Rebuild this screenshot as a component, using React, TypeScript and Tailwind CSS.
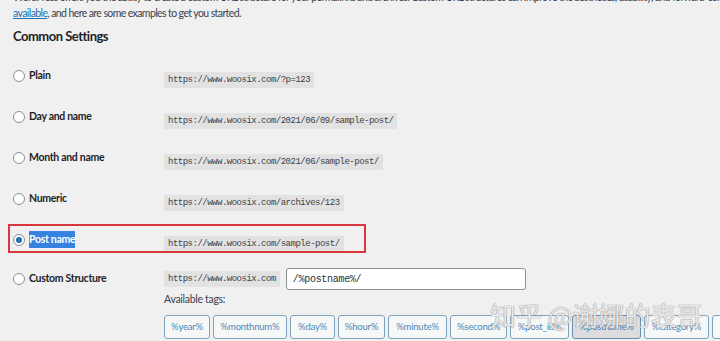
import React from 'react';

const rows = [
  { label: 'Plain', url: 'https://www.woosix.com/?p=123' },
  { label: 'Day and name', url: 'https://www.woosix.com/2021/06/09/sample-post/' },
  { label: 'Month and name', url: 'https://www.woosix.com/2021/06/sample-post/' },
  { label: 'Numeric', url: 'https://www.woosix.com/archives/123' },
];

// tag buttons, widths taken from the screenshot
const tags = [
  { t: '%year%', w: 'w-[46px]' },
  { t: '%monthnum%', w: 'w-[74px]' },
  { t: '%day%', w: 'w-[45px]' },
  { t: '%hour%', w: 'w-[47px]' },
  { t: '%minute%', w: 'w-[59px]' },
  { t: '%second%', w: 'w-[57px]' },
  { t: '%post_id%', w: 'w-[59px]' },
  { t: '%postname%', w: 'w-[69px]' },
  { t: '%category%', w: 'w-[65px]' },
  { t: '%author%', w: 'w-[58px]' },
];

const Radio = ({ checked }: { checked?: boolean }) => (
  <span className="flex h-[12px] w-[12px] shrink-0 items-center justify-center rounded-full border border-[#8c8f94] bg-white">
    {checked && <span className="h-[6px] w-[6px] rounded-full bg-[#2271b1]" />}
  </span>
);

const Code = ({ children }: { children: React.ReactNode }) => (
  <code className="inline-block h-[16px] bg-[#e2e2e3] px-[4px] font-['Liberation_Mono',monospace] text-[9px] leading-[16px] tracking-[-0.5px] text-[#3c434a]">
    {children}
  </code>
);

export default function App() {
  return (
    <div className="relative h-[341px] w-[720px] overflow-hidden bg-[#f0f0f1] font-['Lato',sans-serif] text-[#1d2327]">
      <div className="mt-[-11px] whitespace-nowrap px-[13px] text-[10.5px] leading-[16px] tracking-[-0.6px] text-[#3c434a]">
        <p>
          WordPress offers you the ability to create a custom URL structure for your permalinks and archives. Custom URL
          structures can improve the aesthetics, usability, and forward-compatibility of your links. A number of tags are
        </p>
        <p>
          <span className="text-[#2271b1] underline">available</span>, and here are some examples to get you started.
        </p>
      </div>

      <h2 className="mt-[5px] px-[13px] text-[13px] font-bold leading-[20px] tracking-[-0.5px]">Common Settings</h2>

      <div className="mt-[9px]">
        {rows.map((r) => (
          <div key={r.label} className="grid h-[41px] grid-cols-[151px_1fr] items-center px-[13px]">
            <label className="flex items-center gap-[4px] text-[10.5px] font-bold tracking-[-0.3px]">
              <Radio />
              {r.label}
            </label>
            <div>
              <Code>{r.url}</Code>
            </div>
          </div>
        ))}

        <div className="relative grid h-[41px] grid-cols-[151px_1fr] items-center px-[13px]">
          <div className="absolute left-[8px] top-[5px] h-[29px] w-[358px] border-2 border-[#d9363e]" />
          <label className="flex items-center gap-[4px] text-[10.5px] font-bold tracking-[-0.3px]">
            <Radio checked />
            <span className="bg-[#3582e0] leading-[17px] text-white">Post name</span>
          </label>
          <div>
            <Code>https://www.woosix.com/sample-post/</Code>
          </div>
        </div>

        <div className="grid grid-cols-[151px_1fr] px-[13px] pt-[8px]">
          <label className="flex h-[22px] items-center gap-[4px] text-[10.5px] font-bold tracking-[-0.3px]">
            <Radio />
            Custom Structure
          </label>
          <div>
            <div className="flex items-center gap-[6px]">
              <Code>https://www.woosix.com</Code>
              <div className="flex h-[22px] w-[240px] items-center rounded-[3px] border border-[#8c8f94] bg-white px-[6px] font-['Liberation_Mono',monospace] text-[10px] tracking-[-0.3px] text-[#2c3338]">
                /%postname%/
              </div>
            </div>
            <p className="mt-[1px] text-[10.5px] leading-[16px] tracking-[-0.3px] text-[#3c434a]">Available tags:</p>
            <div className="mt-[8px] flex gap-[3px] whitespace-nowrap">
              {tags.map(({ t, w }) => (
                <span
                  key={t}
                  className={`flex h-[24px] shrink-0 items-center justify-center rounded-[3px] border text-[9.5px] tracking-[-0.2px] ${w} ${
                    t === '%postname%'
                      ? 'border-[#6c8fab] bg-[#dcdcde] text-[#4a7fae]'
                      : 'border-[#7fa3bf] bg-[#f6f7f7] text-[#4d88b8]'
                  }`}
                >
                  {t}
                </span>
              ))}
            </div>
          </div>
        </div>
      </div>

      <div className="absolute left-[490px] top-[299px] whitespace-nowrap font-['Noto_Sans_CJK_SC',sans-serif] text-[26px] leading-[32px] text-white/80 [text-shadow:0_0_1px_#8a8a8a,0_0_1px_#8a8a8a]">
        知乎 @谢娜的表哥
      </div>
    </div>
  );
}
